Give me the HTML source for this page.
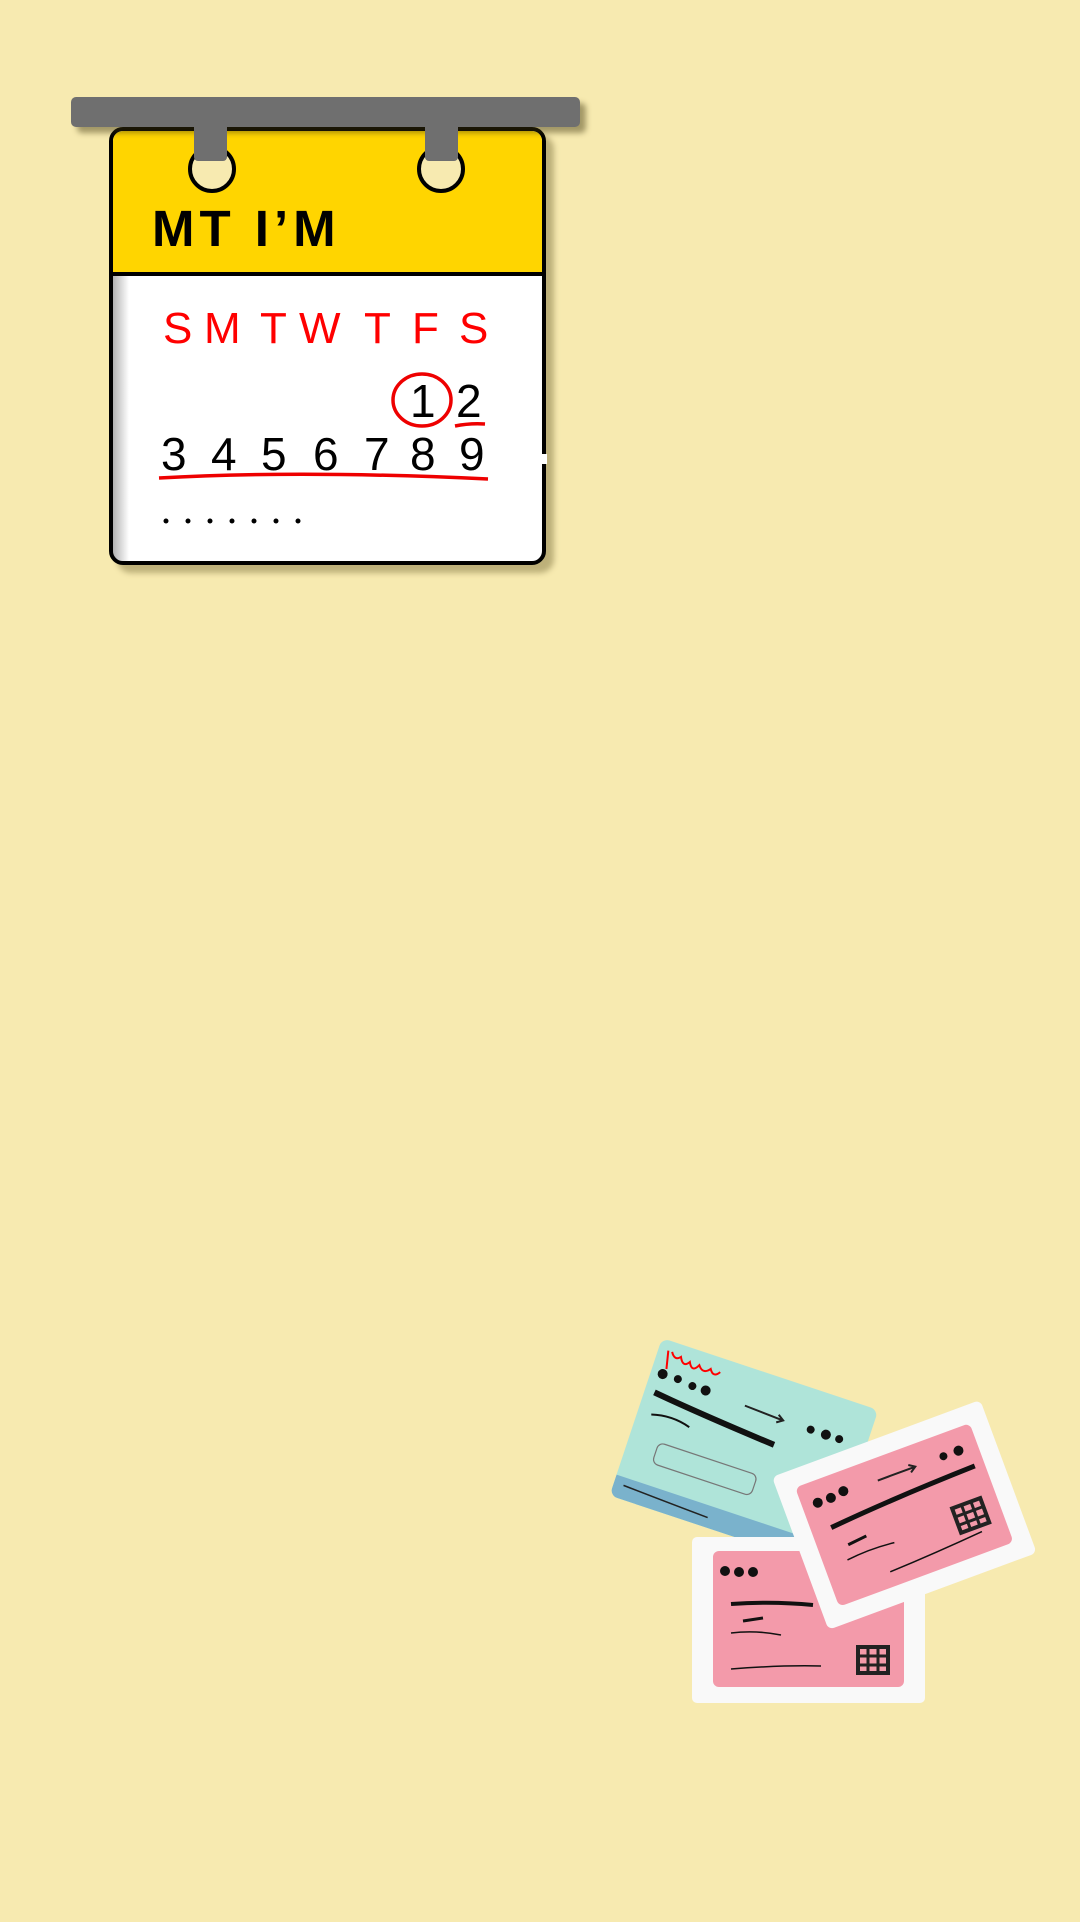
<!DOCTYPE html>
<html><head><meta charset="utf-8"><style>
html,body{margin:0;padding:0}
body{width:1080px;height:1922px;background:#f7eab0;position:relative;overflow:hidden;font-family:"Liberation Sans",sans-serif}
.abs{position:absolute}
</style></head><body>
<div class="abs" style="left:117px;top:135px;width:437px;height:438px;border-radius:14px;background:rgba(80,70,20,0.35);filter:blur(3px)"></div>
<div class="abs" style="left:109px;top:127px;width:429px;height:430px;border:4px solid #000;border-radius:14px;background:#fff;overflow:hidden">
  <div class="abs" style="left:0;top:0;width:100%;height:141px;background:#ffd500;border-bottom:4px solid #000"></div>
  <div class="abs" style="left:0;top:145px;width:16px;height:100%;background:linear-gradient(90deg,rgba(0,0,0,0.3),rgba(0,0,0,0))"></div>
</div>
<div class="abs" style="left:539px;top:454px;width:8px;height:10px;background:#fff"></div>
<div class="abs" style="left:77px;top:103px;width:509px;height:30px;border-radius:5px;background:rgba(60,50,10,0.45);filter:blur(3px)"></div>
<div class="abs" style="left:71px;top:97px;width:509px;height:30px;border-radius:5px;background:#6f6f6f"></div>
<svg class="abs" style="left:0;top:0" width="1080" height="600">
  <circle cx="212" cy="169" r="22" fill="#f7eab0" stroke="#000" stroke-width="4"/>
  <circle cx="441" cy="169" r="22" fill="#f7eab0" stroke="#000" stroke-width="4"/>
  <rect x="194" y="120" width="33" height="41" rx="4" fill="#6f6f6f"/>
  <rect x="425" y="120" width="33" height="41" rx="4" fill="#6f6f6f"/>
  <ellipse cx="422" cy="400" rx="29" ry="26" fill="none" stroke="#e00" stroke-width="3.5"/>
  <path d="M455 426 Q470 423 485 424" stroke="#e00" stroke-width="3.5" fill="none"/>
  <path d="M159 478 Q300 470 488 479" stroke="#e00" stroke-width="3.5" fill="none"/>
  <g fill="#000"><circle cx="166" cy="521" r="2.5"/><circle cx="188" cy="521" r="2.5"/><circle cx="210" cy="521" r="2.5"/><circle cx="232" cy="521" r="2.5"/><circle cx="254" cy="521" r="2.5"/><circle cx="276" cy="521" r="2.5"/><circle cx="298" cy="521" r="2.5"/></g>
</svg>
<div class="abs" style="left:152px;top:203px;font-size:51px;font-weight:bold;letter-spacing:5px;line-height:1">MT I’M</div>
<div class="abs" style="top:307px;left:0;font-size:44px;color:#f00;line-height:1">
<span class="abs" style="left:163px">S</span><span class="abs" style="left:204px">M</span><span class="abs" style="left:260px">T</span><span class="abs" style="left:299px">W</span><span class="abs" style="left:364px">T</span><span class="abs" style="left:412px">F</span><span class="abs" style="left:459px">S</span></div>
<div class="abs" style="top:378px;left:0;font-size:46px;line-height:1">
<span class="abs" style="left:410px">1</span><span class="abs" style="left:456px">2</span></div>
<div class="abs" style="top:431px;left:0;font-size:46px;line-height:1">
<span class="abs" style="left:161px">3</span><span class="abs" style="left:211px">4</span><span class="abs" style="left:261px">5</span><span class="abs" style="left:313px">6</span><span class="abs" style="left:364px">7</span><span class="abs" style="left:410px">8</span><span class="abs" style="left:459px">9</span></div>

<div class="abs" style="left:662px;top:1338px;width:228px;height:166px;transform-origin:0 0;transform:rotate(18.4deg);border-radius:8px;background:#afe4d9;overflow:hidden">
  <div class="abs" style="left:0;bottom:0;width:100%;height:22px;background:#7ab2cc"></div>
  <svg class="abs" style="left:0;top:0" width="228" height="166">
    <path d="M10 10 L14 28 M14 10 q5 8 10 2 q5 10 10 2 q5 10 10 0 q6 8 12 0 q5 8 10 0" stroke="#f00" stroke-width="2" fill="none"/>
    <g fill="#111"><circle cx="12" cy="34" r="5"/><circle cx="28" cy="34" r="4"/><circle cx="44" cy="36" r="4"/><circle cx="58" cy="36" r="5"/><circle cx="170" cy="40" r="4"/><circle cx="186" cy="40" r="5"/><circle cx="200" cy="40" r="4"/></g>
    <path d="M10 54 Q60 60 140 66" stroke="#111" stroke-width="6" fill="none"/>
    <path d="M100 38 L140 40 M135 36 l6 4 -6 4" stroke="#222" stroke-width="2" fill="none"/>
    <path d="M14 76 q20 -6 40 0" stroke="#111" stroke-width="2" fill="none"/>
    <rect x="30" y="100" width="104" height="22" rx="6" fill="none" stroke="#777" stroke-width="1.2"/>
    <path d="M10 152 q40 2 90 4" stroke="#222" stroke-width="1.5" fill="none"/>
  </svg>
</div>
<div class="abs" style="left:692px;top:1537px;width:233px;height:166px;background:#f9f9f9;border-radius:5px"></div>
<div class="abs" style="left:713px;top:1551px;width:191px;height:136px;background:#f39aaa;border-radius:6px">
  <svg width="191" height="136">
    <g fill="#111"><circle cx="12" cy="20" r="5"/><circle cx="26" cy="21" r="5"/><circle cx="40" cy="21" r="5"/></g>
    <path d="M18 53 Q60 50 100 54" stroke="#111" stroke-width="4" fill="none"/>
    <path d="M30 70 l20 -3" stroke="#111" stroke-width="3"/>
    <path d="M18 82 q25 -3 50 2" stroke="#111" stroke-width="1.5" fill="none"/>
    <path d="M18 118 q50 -4 90 -3" stroke="#111" stroke-width="1.5" fill="none"/>
    <rect x="145" y="96" width="30" height="26" fill="none" stroke="#222" stroke-width="4"/>
    <path d="M155 96 v26 M165 96 v26 M145 105 h30 M145 114 h30" stroke="#222" stroke-width="3"/>
  </svg>
</div>
<div class="abs" style="left:772px;top:1477px;width:222px;height:163px;transform-origin:0 0;transform:rotate(-20.3deg);background:#f9f9f9;border-radius:6px">
  <div class="abs" style="left:18px;top:18px;width:186px;height:127px;background:#f39aaa;border-radius:6px">
    <svg width="186" height="127">
      <g fill="#111"><circle cx="16" cy="22" r="5"/><circle cx="30" cy="22" r="5"/><circle cx="44" cy="20" r="5"/><circle cx="150" cy="22" r="4"/><circle cx="166" cy="22" r="5"/></g>
      <path d="M80 22 L120 22 M114 18 l6 4 -6 4" stroke="#222" stroke-width="2" fill="none"/>
      <path d="M20 50 Q90 44 176 42" stroke="#111" stroke-width="5" fill="none"/>
      <path d="M30 72 l20 -2" stroke="#111" stroke-width="3"/>
      <path d="M24 86 q25 -3 50 0" stroke="#111" stroke-width="1.5" fill="none"/>
      <path d="M60 112 q50 -2 100 -6" stroke="#111" stroke-width="1.5" fill="none"/>
      <rect x="140" y="74" width="30" height="26" fill="none" stroke="#222" stroke-width="4"/>
      <path d="M150 74 v26 M160 74 v26 M140 83 h30 M140 92 h30" stroke="#222" stroke-width="3"/>
    </svg>
  </div>
</div>
</body></html>
